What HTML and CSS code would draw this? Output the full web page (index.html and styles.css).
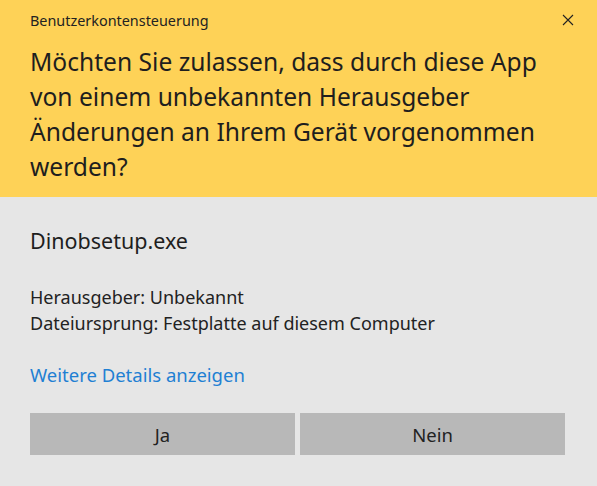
FILE: index.html
```html
<!DOCTYPE html>
<html lang="de">
<head>
<meta charset="utf-8">
<title>Benutzerkontensteuerung</title>
<link rel="stylesheet" href="styles.css">
</head>
<body>
<div class="dialog">
  <header class="header">
    <div class="titlebar">
      <span class="title">Benutzerkontensteuerung</span>
      <span class="close" aria-label="Schließen">
        <svg width="12" height="12" viewBox="0 0 12 12"><path d="M1 1 L11 11 M11 1 L1 11" stroke="#222" stroke-width="1.1" fill="none"/></svg>
      </span>
    </div>
    <h1 class="question">Möchten Sie zulassen, dass durch diese App von einem unbekannten Herausgeber Änderungen an Ihrem Gerät vorgenommen werden?</h1>
  </header>
  <main class="body">
    <div class="appname">Dinobsetup.exe</div>
    <div class="info">
      <div>Herausgeber: Unbekannt</div>
      <div>Dateiursprung: Festplatte auf diesem Computer</div>
    </div>
    <a class="details" href="#">Weitere Details anzeigen</a>
    <div class="buttons">
      <button class="btn">Ja</button>
      <button class="btn">Nein</button>
    </div>
  </main>
</div>
</body>
</html>
```
FILE: styles.css
```css
html, body {
  margin: 0;
  padding: 0;
  width: 597px;
  height: 486px;
  overflow: hidden;
  background: #e6e6e6;
}
.dialog {
  font-family: "Noto Sans", "Open Sans", sans-serif;
  color: #1a1a1a;
  display: flex;
  flex-direction: column;
  height: 486px;
}
.header {
  background: #fed257;
  height: 197px;
  box-sizing: border-box;
  padding: 10px 0 0 30px;
}
.titlebar {
  display: flex;
  justify-content: space-between;
  align-items: center;
  height: 20px;
}
.title {
  font-size: 14.4px;
  color: #222;
}
.close {
  display: flex;
  width: 12px;
  height: 12px;
  margin-right: 23px;
}
.question {
  margin: 14px 0 0 0;
  font-weight: normal;
  font-size: 24.6px;
  line-height: 35px;
  width: 525px;
  color: #1e1e1e;
}
.body {
  flex: 1;
  padding: 30px 32px 0 30px;
  display: flex;
  flex-direction: column;
}
.appname {
  font-size: 21.5px;
  line-height: 28px;
  color: #1e1e1e;
}
.info {
  margin-top: 29px;
  font-size: 18px;
  line-height: 26px;
  color: #222;
}
.details {
  margin-top: 26px;
  font-size: 18.5px;
  line-height: 26px;
  color: #1f80d3;
  text-decoration: none;
  align-self: flex-start;
}
.buttons {
  margin-top: 25px;
  display: grid;
  grid-template-columns: 1fr 1fr;
  gap: 5px;
}
.btn {
  height: 42px;
  border: none;
  background: #b8b8b8;
  font-family: "Noto Sans", "Open Sans", sans-serif;
  font-size: 18.5px;
  color: #222;
  padding: 0;
}
```
